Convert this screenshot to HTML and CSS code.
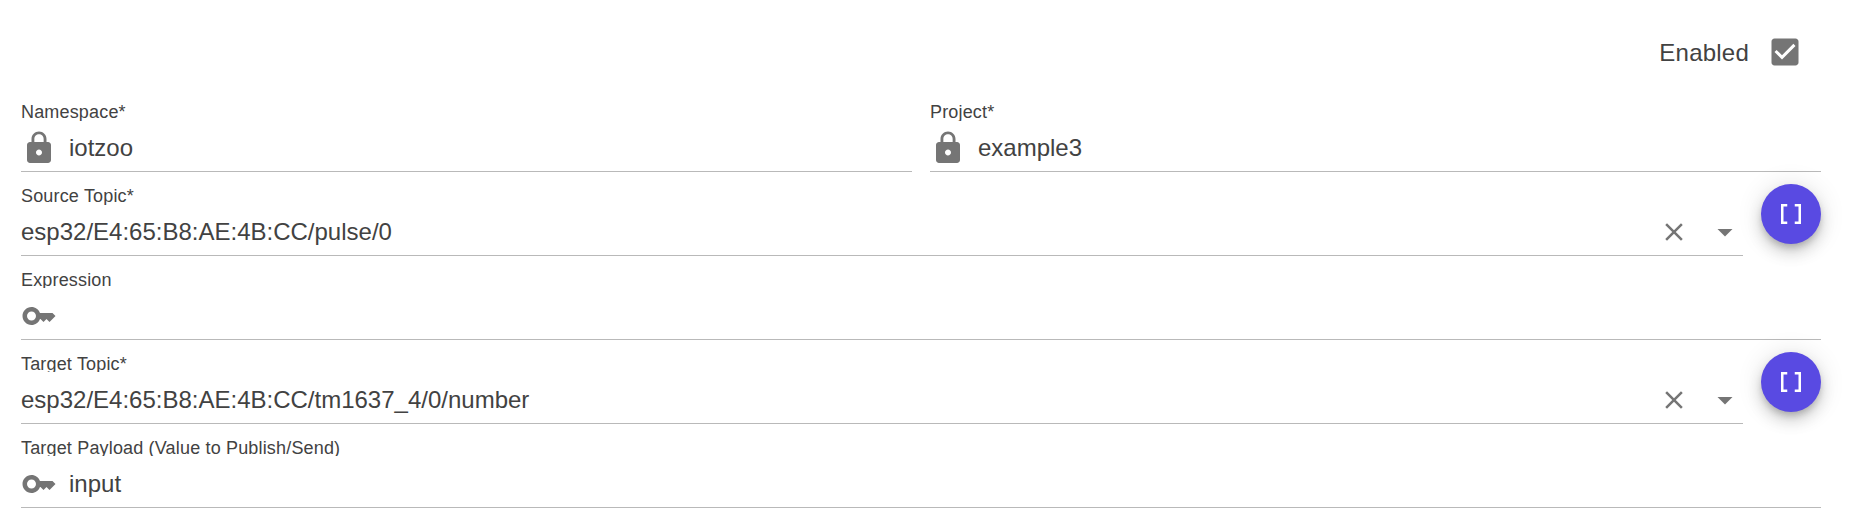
FILE: index.html
```html
<!DOCTYPE html>
<html lang="en">
<head>
<meta charset="utf-8">
<title>Rule</title>
<link rel="stylesheet" href="styles.css">
</head>
<body>
<svg class="defs" aria-hidden="true">
  <symbol id="lock" viewBox="0 0 24 24"><path d="M18 8h-1V6c0-2.760-2.240-5-5-5S7 3.240 7 6v2H6c-1.100 0-2 .9-2 2v10c0 1.100.9 2 2 2h12c1.100 0 2-.9 2-2V10c0-1.100-.9-2-2-2zm-6 9c-1.100 0-2-.9-2-2s.9-2 2-2 2 .9 2 2-.9 2-2 2zm3.100-9H8.900V6c0-1.710 1.390-3.100 3.100-3.100s3.100 1.390 3.100 3.100v2z"/></symbol>
  <symbol id="key" viewBox="0 0 24 24"><path d="M21 10h-8.350C11.830 7.670 9.610 6 7 6c-3.310 0-6 2.690-6 6s2.690 6 6 6c2.610 0 4.830-1.670 5.650-4H13l2 2 2-2 2 2 4-4.040L21 10zM7 15c-1.650 0-3-1.350-3-3s1.350-3 3-3 3 1.350 3 3-1.350 3-3 3z"/></symbol>
  <symbol id="clear" viewBox="0 0 24 24"><path d="M19 6.410L17.590 5 12 10.590 6.410 5 5 6.410 10.590 12 5 17.590 6.410 19 12 13.410 17.590 19 19 17.590 13.410 12z"/></symbol>
  <symbol id="drop" viewBox="0 0 24 24"><path d="M7 10l5 5 5-5z"/></symbol>
  <symbol id="array" viewBox="0 0 24 24"><path d="M15 4v2h3v12h-3v2h5V4zM4 20h5v-2H6V6h3V4H4z"/></symbol>
  <symbol id="check" viewBox="0 0 24 24"><path d="M19 3H5c-1.110 0-2 .9-2 2v14c0 1.100.89 2 2 2h14c1.110 0 2-.9 2-2V5c0-1.100-.89-2-2-2zm-9 14l-5-5 1.410-1.410L10 14.170l7.590-7.590L19 8l-9 9z"/></symbol>
</svg>
<form class="form">
  <div class="enabled"><span class="caption">Enabled</span><svg class="icon"><use href="#check"/></svg></div>
  <div class="row">
    <div class="field"><div class="label tall">Namespace*</div><div class="control"><svg class="icon lead"><use href="#lock"/></svg><span class="value">iotzoo</span></div></div>
    <div class="field"><div class="label tall">Project*</div><div class="control"><svg class="icon lead"><use href="#lock"/></svg><span class="value">example3</span></div></div>
  </div>
  <div class="row">
    <div class="field"><div class="label tall">Source Topic*</div><div class="control"><span class="value">esp32/E4:65:B8:AE:4B:CC/pulse/0</span><svg class="icon small"><use href="#clear"/></svg><svg class="icon arrow"><use href="#drop"/></svg></div></div>
    <div class="fab"><svg class="icon small"><use href="#array"/></svg></div>
  </div>
  <div class="row">
    <div class="field"><div class="label">Expression</div><div class="control"><svg class="icon lead"><use href="#key"/></svg><span class="value"></span></div></div>
  </div>
  <div class="row">
    <div class="field"><div class="label">Target Topic*</div><div class="control"><span class="value">esp32/E4:65:B8:AE:4B:CC/tm1637_4/0/number</span><svg class="icon small"><use href="#clear"/></svg><svg class="icon arrow"><use href="#drop"/></svg></div></div>
    <div class="fab"><svg class="icon small"><use href="#array"/></svg></div>
  </div>
  <div class="row">
    <div class="field"><div class="label">Target Payload (Value to Publish/Send)</div><div class="control"><svg class="icon lead"><use href="#key"/></svg><span class="value">input</span></div></div>
  </div>
</form>
</body>
</html>
```
FILE: styles.css
```css
* { box-sizing: border-box; }
body {
  margin: 0;
  background: #fff;
  color: #424242;
  font-family: "Liberation Sans", Arial, sans-serif;
  font-size: 24px;
}
.defs { display: none; }
.form { padding: 16px 28px 0 21px; }
.icon { width: 36px; height: 36px; flex: none; fill: #757575; display: block; }
.enabled {
  display: flex;
  align-items: center;
  justify-content: flex-end;
  gap: 18px;
  height: 72px;
  padding-right: 18px;
}
.caption { padding-top: 2px; letter-spacing: 0.225px; }
.row { display: flex; gap: 18px; height: 84px; }
.field {
  flex: 1 1 0;
  min-width: 0;
  display: flex;
  flex-direction: column;
  padding-top: 14px;
  border-bottom: 1px solid #b9b9b9;
}
.label {
  height: 18px;
  line-height: 20px;
  font-size: 18px;
  letter-spacing: 0.16875px;
  overflow: hidden;
}
.control { display: flex; align-items: center; height: 36px; margin-top: 10px; }
.tall { height: 19px; }
.tall + .control { margin-top: 9px; }
.lead { margin-right: 12px; }
.value { flex: 1; line-height: 36px; white-space: nowrap; }
.small { width: 30px; height: 30px; }
.arrow { margin-left: 18px; }
.fab {
  flex: none;
  display: flex;
  align-items: center;
  justify-content: center;
  width: 60px;
  height: 60px;
  margin-top: 12px;
  border-radius: 50%;
  background: #594ae2;
  box-shadow: 0 4.5px 7.5px -1.5px rgba(0,0,0,.2), 0 9px 15px rgba(0,0,0,.14), 0 1.5px 27px rgba(0,0,0,.12);
}
.fab .icon { fill: #fff; }
```
